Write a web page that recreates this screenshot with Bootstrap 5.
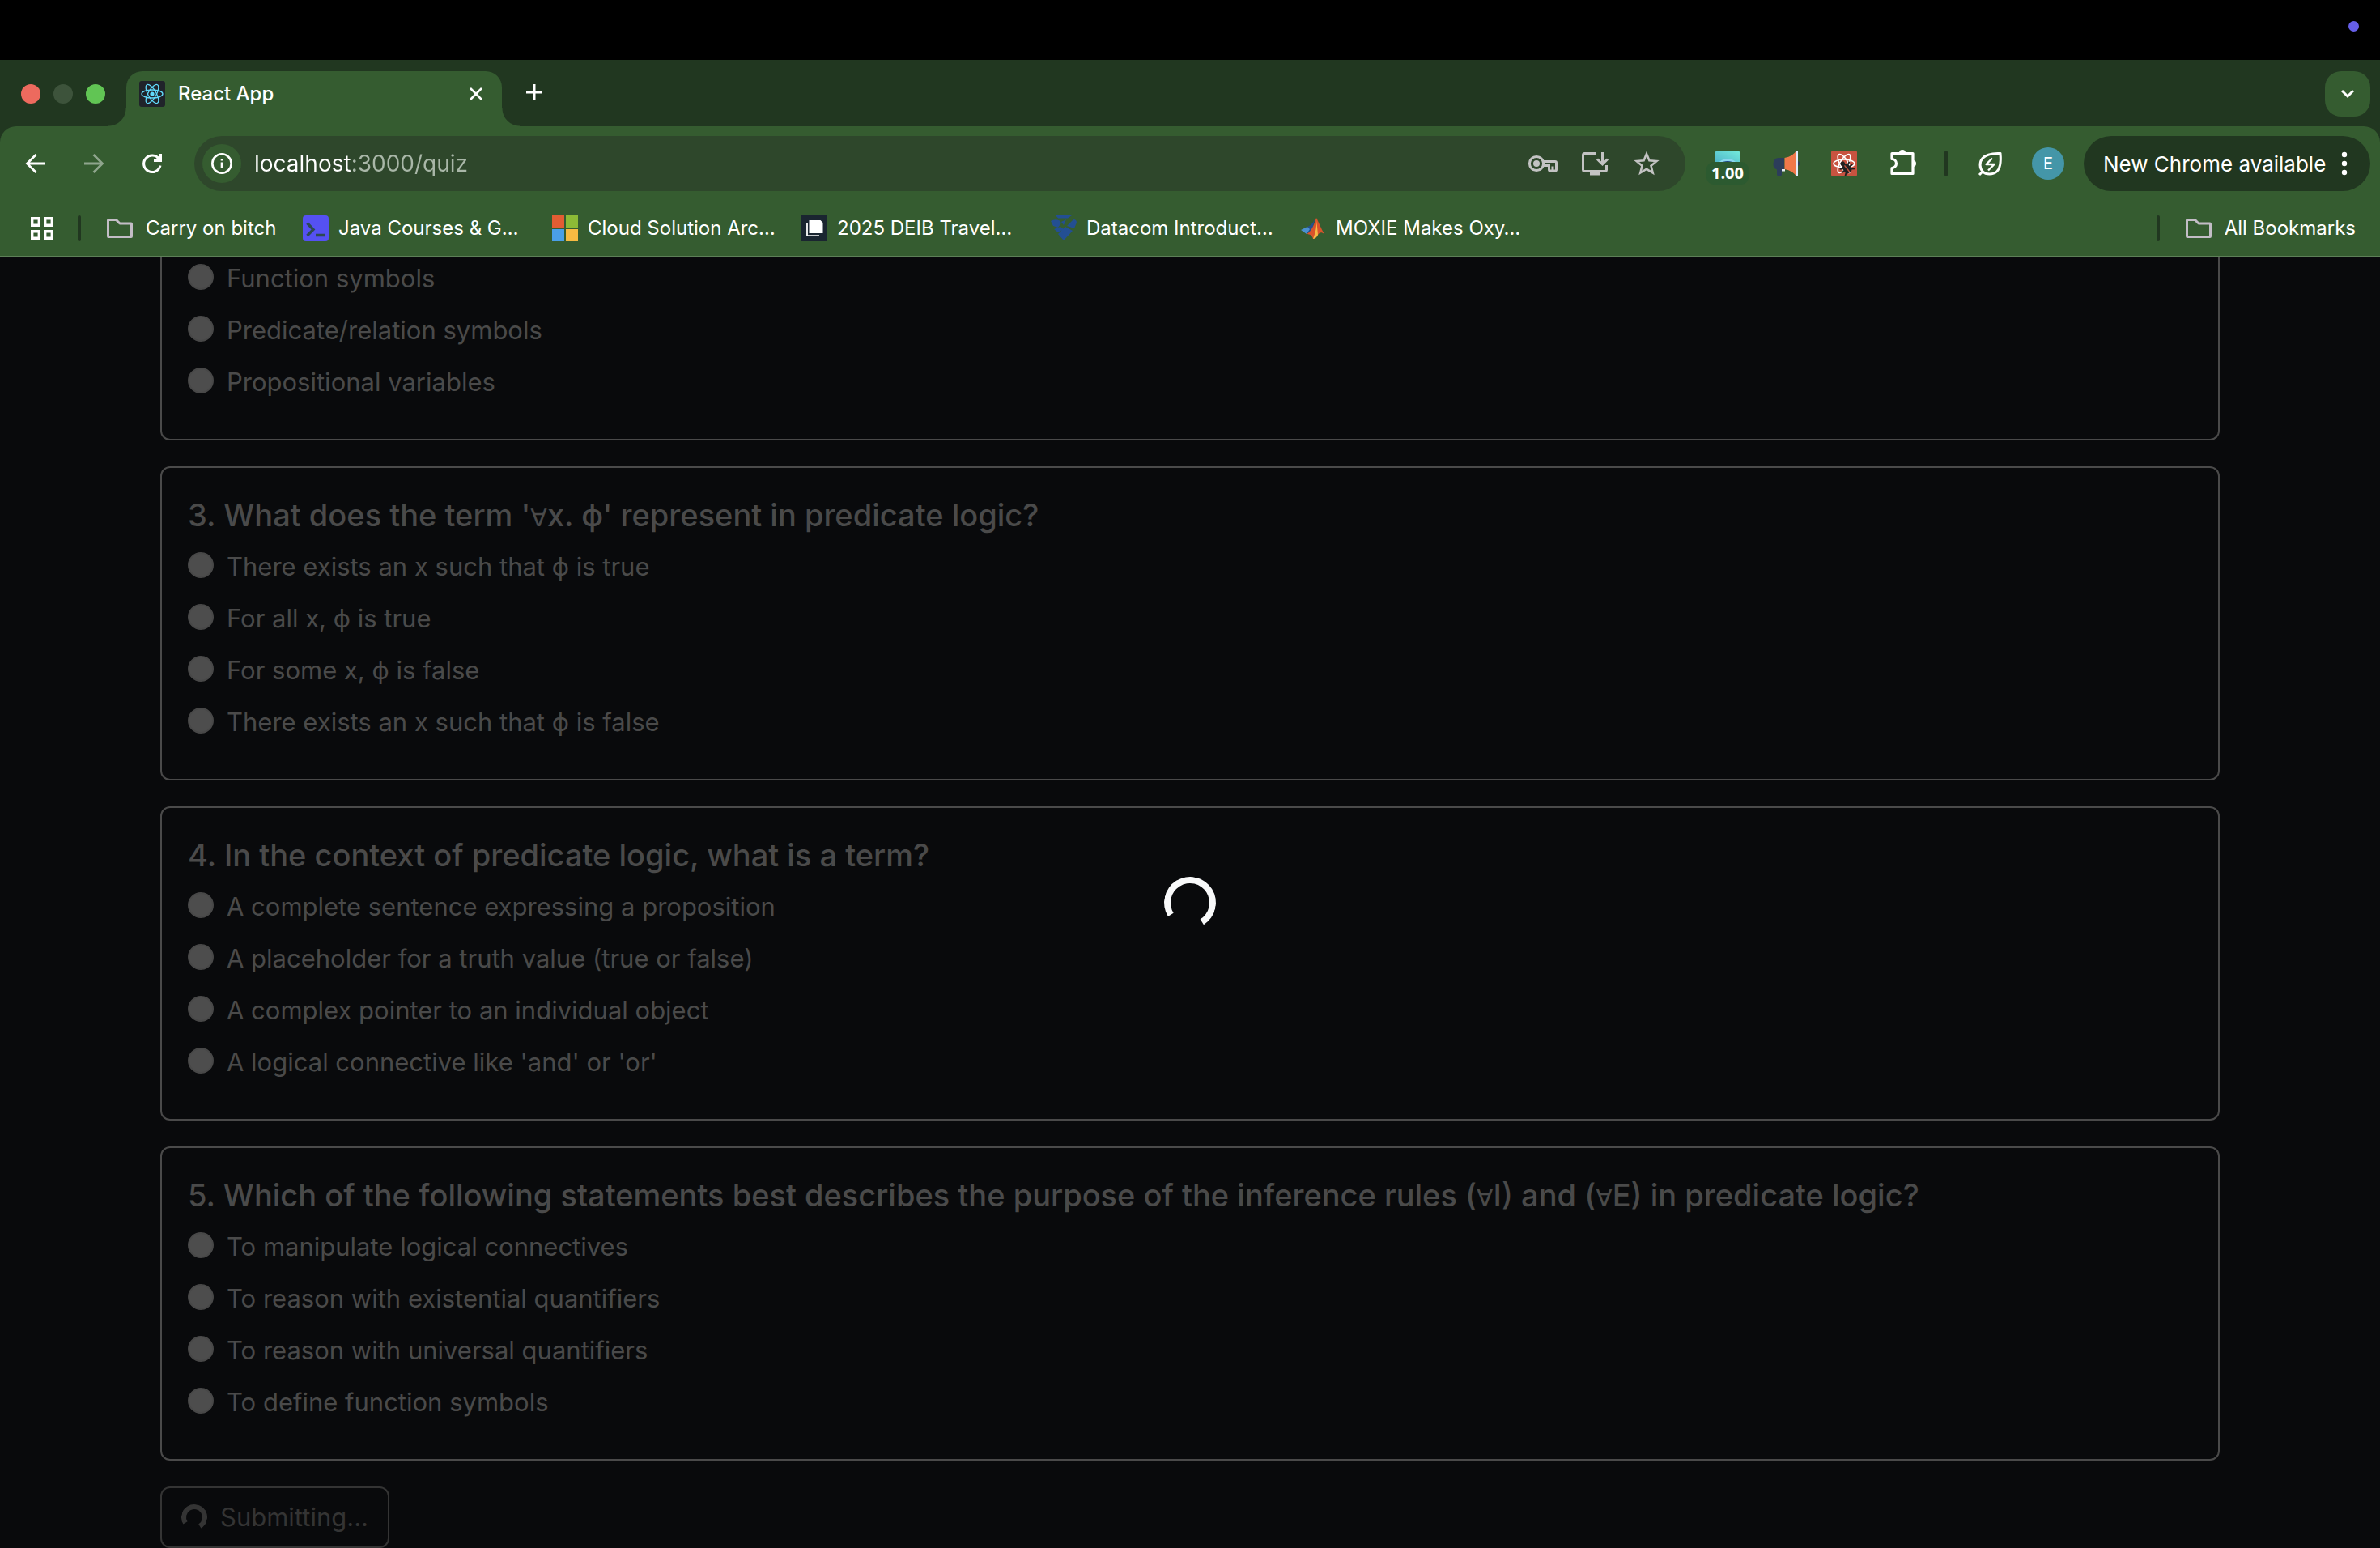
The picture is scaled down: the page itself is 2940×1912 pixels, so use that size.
<!DOCTYPE html>
<html lang="en">
<head>
<meta charset="utf-8">
<meta name="viewport" content="width=device-width, initial-scale=1">
<title>React App</title>
<link href="https://cdn.jsdelivr.net/npm/bootstrap@5.3.0/dist/css/bootstrap.min.css" rel="stylesheet">
<style>
:root{--strip:#213720;--bar:#355c30;--field:#2e472b;--page:#090a0c;--dim:#4a4a4a;--soft:#c3c3c3}
body{font-family:Inter,"Noto Sans",sans-serif;background:var(--page);color:#fff;min-height:100vh;font-size:24px}
svg{display:block;flex:none}
button.plain{background:none;border:0;padding:0;color:inherit;display:flex;align-items:center;justify-content:center}
.menubar{background:#000;height:74px;padding:0 26px}
.cam{width:13px;height:13px;border-radius:50%;background:#665fe8;margin-top:26px}
.chrome{background:var(--strip)}
.tabstrip{padding:14px 12px 0 26px}
.tall{height:56px}
.light{width:24px;height:24px;border-radius:50%}
.lights{gap:16px;margin-right:26px}
.tab-on{width:464px;height:68px;padding:0 20px 12px 16px;gap:16px;background:var(--bar);border-radius:20px 20px 0 0;position:relative;font-weight:500}
.tab-on::before,.tab-on::after{content:"";position:absolute;bottom:0;width:22px;height:22px}
.tab-on::before{right:100%;background:radial-gradient(circle at 0 0,transparent 21px,var(--bar) 22px)}
.tab-on::after{left:100%;background:radial-gradient(circle at 100% 0,transparent 21px,var(--bar) 22px)}
.newtab{margin-left:28px}
.tabsearch{width:56px;border-radius:20px!important;background:var(--bar)!important}
.bars{background:var(--bar);border-radius:20px 20px 0 0;border-bottom:2px solid #5d8058}
.toolrow{height:92px;padding:0 12px 0 24px;gap:32px}
.toolrow button.plain{width:40px;height:40px;flex:none}
.omni{height:68px;border-radius:34px;background:var(--field);padding:0 28px 0 10px;gap:16px}
.omni .info{width:48px!important;height:48px!important;border-radius:50%;background:var(--bar)!important}
.urlbox{font-size:28px;border:0;outline:0;padding:0;color:transparent;background:linear-gradient(90deg,#fff 119px,#a9b7a8 119px);-webkit-background-clip:text;background-clip:text}
.omni-tools{gap:24px;color:var(--soft)}
.vline{width:4px;height:32px;border-radius:2px;background:var(--strip);flex:none}
.count{position:absolute;left:-6px;top:18px;width:52px;height:28px;border-radius:9px;background:#2c5a30;font:700 20px/28px "Open Sans",sans-serif;text-align:center}
.avatar{width:40px;height:40px;border-radius:50%;background:#4496a8;font-size:20px;line-height:40px;text-align:center}
.update{width:354px!important;height:68px!important;border-radius:34px;background:var(--strip)!important;padding:0 28px 0 24px!important;font-size:26px;justify-content:space-between!important;white-space:nowrap}
.marks{height:68px;padding:0 30px 0 36px}
.marks a{color:#fff;text-decoration:none;white-space:nowrap}
.mk{width:308px;gap:12px}
.mk-dir{width:242px;gap:16px;margin-left:32px}
.mk-all{gap:16px;margin-left:32px}
.quiz{padding:0 198px;font-size:31px;line-height:48px;color:var(--dim);overflow:hidden}
.qcard{background:transparent;border:2px solid var(--dim);border-radius:12px;color:inherit;margin-bottom:32px}
.qcard .card-body{padding:32px}
.qcard.cut{border-top:0;border-radius:0 0 12px 12px}
.qcard.cut .card-body{padding-top:0}
.qcard h5{font-size:38px;line-height:48px;font-weight:500;padding-top:2px;margin-bottom:14px}
.opt{padding-left:48px;height:48px;min-height:48px;margin-bottom:16px}
.opt .form-check-input{width:32px;height:32px;margin:8px 0 0 -48px;background:#4d4d4d;border:2px solid #484848;opacity:1}
.opt .form-check-label{opacity:1!important;display:block;padding-top:2px}
.all{font-family:"DejaVu Sans",sans-serif;font-size:30px;font-weight:400;line-height:1}
.send{border:2px solid #343434!important;color:#343434!important;border-radius:12px;font-size:31px;line-height:48px;padding:12px 24px;opacity:1!important;gap:16px}
.spin{animation:none;transform:rotate(103deg)}
.spin-lg{width:64px;height:64px;border-width:8px;color:#f8f9fa}
.spin-sm{width:32px;height:32px;border-width:6px}
.veil{position:absolute;inset:0;pointer-events:none}
</style>
</head>
<body class="d-flex flex-column">
<div class="menubar d-flex justify-content-end"><span class="cam"></span></div>
<header class="chrome">
  <div class="tabstrip d-flex align-items-start">
    <div class="lights tall d-flex align-items-center">
      <span class="light" style="background:#ed6a5e"></span><span class="light" style="background:#3d533b"></span><span class="light" style="background:#61c554"></span>
    </div>
    <div class="tab-on d-flex align-items-center">
      <svg width="32" height="32" viewBox="0 0 32 32"><rect width="32" height="32" rx="3" fill="#20232a"/><g fill="none" stroke="#61dafb" stroke-width="1.3"><ellipse cx="16" cy="16" rx="13" ry="5"/><ellipse cx="16" cy="16" rx="13" ry="5" transform="rotate(60 16 16)"/><ellipse cx="16" cy="16" rx="13" ry="5" transform="rotate(120 16 16)"/></g><circle cx="16" cy="16" r="2.6" fill="#61dafb"/></svg>
      <span class="flex-grow-1">React App</span>
      <button class="plain" aria-label="Close tab"><svg width="24" height="24" viewBox="0 0 24 24" stroke="#fff" stroke-width="2.6"><path d="M5 5l14 14M19 5L5 19"/></svg></button>
    </div>
    <button class="plain newtab tall" aria-label="New tab"><svg width="24" height="24" viewBox="0 0 24 24" stroke="#fff" stroke-width="3"><path d="M12 0v20M2 10h20"/></svg></button>
    <button class="plain tabsearch tall ms-auto" aria-label="Search tabs"><svg width="24" height="24" viewBox="0 0 24 24" fill="none" stroke="#fff" stroke-width="3"><path d="M5 8l7 7 7-7"/></svg></button>
  </div>
  <div class="bars">
    <div class="toolrow d-flex align-items-center">
      <button class="plain" aria-label="Back"><svg width="40" height="40" viewBox="0 0 40 40" fill="none" stroke="#fff" stroke-width="2.8"><path d="M32 20H10M20.500 9L9.500 20l11 11"/></svg></button>
      <button class="plain" aria-label="Forward"><svg width="40" height="40" viewBox="0 0 40 40" fill="none" stroke="#8fa58d" stroke-width="2.800"><path d="M8 20h22M19.500 9l11 11-11 11"/></svg></button>
      <button class="plain" aria-label="Reload"><svg width="40" height="40" viewBox="0 0 40 40" fill="none" stroke="#fff" stroke-width="3"><path d="M30 22.500A10.300 10.300 0 1 1 28.500 14.500M30.500 8v8.500H22"/><path d="M31 8v9h-9z" fill="#fff" stroke="none"/></svg></button>
      <div class="omni d-flex align-items-center flex-grow-1">
        <button class="plain info" aria-label="Site information"><svg width="28" height="28" viewBox="0 0 28 28" fill="none" stroke="#fff" stroke-width="2.600"><circle cx="14" cy="14" r="11.700"/><path d="M14 12.500v7.500M14 8v2.600"/></svg></button>
        <input class="urlbox flex-grow-1" type="text" aria-label="Address" value="localhost:3000/quiz">
        <div class="omni-tools d-flex">
          <button class="plain" aria-label="Passwords"><svg width="40" height="40" viewBox="0 0 40 40" fill="none" stroke="currentColor" stroke-width="3"><circle cx="12" cy="20" r="8.600"/><circle cx="12" cy="20" r="4" fill="currentColor" stroke="none"/><path d="M20 17.500h15q1.500 0 1.500 1.500v8.500q0 1.500-1.500 1.500h-6q-1.500 0-1.500-1.500V22.500H20M32 23.500V28" /></svg></button>
          <button class="plain" aria-label="Install app"><svg width="40" height="40" viewBox="0 0 40 40" fill="none" stroke="currentColor" stroke-width="3"><path d="M22 7.500H7.500q-2 0-2 2v18q0 2 2 2h25q2 0 2-2V22M29.500 6v14M23 14.500l6.500 6.500 6.500-6.500"/><path d="M14 30h12v4.500H14z" fill="currentColor" stroke="none"/></svg></button>
          <button class="plain" aria-label="Bookmark this page"><svg width="40" height="40" viewBox="0 0 40 40" fill="none" stroke="currentColor" stroke-width="2.600"><path d="M20 8l3.400 8.300 9 .7-6.900 5.800 2.200 8.700L20 26.800l-7.700 4.700 2.200-8.700L7.600 17l9-.7z"/></svg></button>
        </div>
      </div>
      <button class="plain position-relative" aria-label="Screen capture">
        <svg width="40" height="40" viewBox="0 0 40 40"><defs><linearGradient id="cap" x1="0" y1="1" x2="1" y2="0"><stop offset="0" stop-color="#4fb3c9"/><stop offset="1" stop-color="#74ecdc"/></linearGradient></defs><path d="M4 20V9q0-5 5-5h22q5 0 5 5v11z" fill="url(#cap)"/><path d="M8.500 20a12.500 9 0 0 1 23 0z" fill="#8ad6ee"/><path d="M11 20a11 7 0 0 1 18 0z" fill="#173f7c"/></svg>
        <span class="count">1.00</span></button>
      <button class="plain" aria-label="Announcements"><svg width="40" height="40" viewBox="0 0 40 40"><path d="M18 13H11a7 7.500 0 0 0-2 14.500V33q0 3 3 3t3-3v-5h3z" fill="#2c3d5b"/><path d="M15 27h4v2.500h-4z" fill="#e8eef5"/><circle cx="34" cy="20" r="3" fill="#2c3d5b"/><path d="M18.500 13Q29 11 33 4v32Q29 29 18.500 27z" fill="#f0784a"/><path d="M32 4h3v32h-3z" fill="#dfeafa"/></svg></button>
      <button class="plain" aria-label="React Developer Tools"><svg width="40" height="40" viewBox="0 0 40 40"><rect x="4" y="4" width="32" height="32" rx="2" fill="#c85340"/><g fill="none" stroke="#fff" stroke-width="1.600"><ellipse cx="20" cy="20" rx="13" ry="5"/><ellipse cx="20" cy="20" rx="13" ry="5" transform="rotate(60 20 20)"/><ellipse cx="20" cy="20" rx="13" ry="5" transform="rotate(120 20 20)"/></g><g transform="rotate(-38 24 26)"><circle cx="23" cy="18" r="2.800" fill="#222"/><rect x="19" y="20" width="9" height="12" rx="4" fill="#222"/><path d="M16 21l4 2M31 21l-4 2M15 26h17M16 32l4-3M31 32l-4-3" stroke="#222" stroke-width="1.800"/><path d="M23.500 21v10" stroke="#c85340" stroke-width="1.400"/></g></svg></button>
      <button class="plain" aria-label="Extensions"><svg width="40" height="40" viewBox="0 0 40 40" fill="none" stroke="#fff" stroke-width="3.200" stroke-linejoin="round"><path d="M7 7.500h26V32.500H7V25.500a5.500 5.500 0 0 0 0-11z"/><path d="M16 7a4 4 0 0 1 8 0zM33 16a4 4 0 0 1 0 8z" fill="#fff" stroke="none"/></svg></button>
      <span class="vline"></span>
      <button class="plain" aria-label="Energy saver"><svg width="40" height="40" viewBox="0 0 40 40" fill="none" stroke="#fff" stroke-width="3" stroke-linejoin="round"><path d="M33 7.500C34 18 33 26 28.500 30 24 34 15 34 11.500 30 7 26 7 18 11 13.500 15.500 8.500 23 7 33 7.500zM11.500 29.500L7 34"/><path d="M23 13.500l-7.500 7.500h10l-7.500 7.500" stroke-width="2.400"/></svg></button>
      <div class="d-flex align-items-center gap-4">
        <span class="avatar">E</span>
        <button class="plain update"><span>New Chrome available</span><svg width="8" height="32" viewBox="0 0 8 32" fill="#fff"><circle cx="4" cy="5" r="3.200"/><circle cx="4" cy="16" r="3.200"/><circle cx="4" cy="27" r="3.200"/></svg></button>
      </div>
    </div>
    <nav class="marks d-flex align-items-center" aria-label="Bookmarks">
      <button class="plain me-4" aria-label="Apps"><svg width="32" height="32" viewBox="0 0 32 32" fill="none" stroke="#fff" stroke-width="3.400"><path d="M3.700 3.700h8.600v8.600H3.700zM19.700 3.700h8.600v8.600h-8.600zM3.700 19.700h8.600v8.600H3.700zM19.700 19.700h8.600v8.600h-8.600z"/></svg></button>
      <span class="vline ms-1"></span>
      <a href="#" class="mk-dir d-flex align-items-center"><svg width="32" height="32" viewBox="0 0 32 32" fill="none" stroke="#c3bdc6" stroke-width="3" stroke-linejoin="round"><path d="M1.500 26V6q0-.5.500-.5h9.500l4.500 4.500h14q.5 0 .5.500V26q0 .500-.5.500H2q-.5 0-.5-.500z"/></svg>Carry on bitch</a>
      <a href="#" class="mk d-flex align-items-center"><svg width="32" height="32" viewBox="0 0 32 32"><rect width="32" height="32" rx="4" fill="#5551f2"/><path d="M5.500 9.500l7.500 8-7.500 7.500M16 24.500h11" fill="none" stroke="#2d4a52" stroke-width="3.400"/></svg>Java Courses &amp; G…</a>
      <a href="#" class="mk d-flex align-items-center"><svg width="32" height="32" viewBox="0 0 32 32"><path fill="#e25d33" d="M0 0h15v15H0z"/><path fill="#8cba36" d="M17 0h15v15H17z"/><path fill="#4a9fe8" d="M0 17h15v15H0z"/><path fill="#f7ba42" d="M17 17h15v15H17z"/></svg>Cloud Solution Arc…</a>
      <a href="#" class="mk d-flex align-items-center"><svg width="32" height="32" viewBox="0 0 32 32"><path fill="#1a2530" d="M0 0h32v32H0z"/><path d="M9.500 6h14l3 3v13h-17z" fill="#fff"/><path d="M7 10v15.200h15" fill="none" stroke="#fff" stroke-width="1.800"/></svg>2025 DEIB Travel…</a>
      <a href="#" class="mk d-flex align-items-center"><svg width="32" height="32" viewBox="0 0 32 32" fill="#234f92"><path d="M6 0h20l-5 3.500H9zM0 7q5-3 11-.5l2 3-4 5.500-6-2zM28 5q4 0 4 4l-3 7-9-3zM13 8l6-3-3 7zM4 17l8-3 4 3-7 4zM18 14l9 5-11 12-7-8z"/></svg>Datacom Introduct…</a>
      <a href="#" class="mk d-flex align-items-center"><svg width="32" height="32" viewBox="0 0 32 32"><path d="M1 18l8-4 4 3-5 6z" fill="#4a90d0"/><path d="M9 14q6-2 9-9l-3 14-7 4 4-6z" fill="#24508c"/><path d="M20 3c3 5 6 14 10 20-4-3-6-2-8 1-2 3-4 5-6 5-1-4-4-6-8-6 6-3 9-11 12-20z" fill="#d9532c"/><path d="M20 4c1 8-1 18-4 25 3 0 5-3 6-5z" fill="#f6b846"/></svg>MOXIE Makes Oxy…</a>
      <span class="vline ms-auto"></span>
      <a href="#" class="mk-all d-flex align-items-center"><svg width="32" height="32" viewBox="0 0 32 32" fill="none" stroke="#c3bdc6" stroke-width="3" stroke-linejoin="round"><path d="M1.500 26V6q0-.5.500-.5h9.500l4.500 4.500h14q.5 0 .5.500V26q0 .500-.5.500H2q-.5 0-.5-.500z"/></svg>All Bookmarks</a>
    </nav>
  </div>
</header>
<main class="quiz flex-grow-1 position-relative">
  <div class="card qcard cut"><div class="card-body" role="radiogroup" aria-label="Question 2">
    <div class="form-check opt"><input class="form-check-input" type="radio" name="q2" id="q2b" disabled><label class="form-check-label" for="q2b">Function symbols</label></div>
    <div class="form-check opt"><input class="form-check-input" type="radio" name="q2" id="q2c" disabled><label class="form-check-label" for="q2c">Predicate/relation symbols</label></div>
    <div class="form-check opt"><input class="form-check-input" type="radio" name="q2" id="q2d" disabled><label class="form-check-label" for="q2d">Propositional variables</label></div>
  </div></div>
  <div class="card qcard"><div class="card-body" role="radiogroup" aria-labelledby="t3">
    <h5 id="t3">3. What does the term '<span class="all">∀</span>x. ϕ' represent in predicate logic?</h5>
    <div class="form-check opt"><input class="form-check-input" type="radio" name="q3" id="q3a" disabled><label class="form-check-label" for="q3a">There exists an x such that ϕ is true</label></div>
    <div class="form-check opt"><input class="form-check-input" type="radio" name="q3" id="q3b" disabled><label class="form-check-label" for="q3b">For all x, ϕ is true</label></div>
    <div class="form-check opt"><input class="form-check-input" type="radio" name="q3" id="q3c" disabled><label class="form-check-label" for="q3c">For some x, ϕ is false</label></div>
    <div class="form-check opt"><input class="form-check-input" type="radio" name="q3" id="q3d" disabled><label class="form-check-label" for="q3d">There exists an x such that ϕ is false</label></div>
  </div></div>
  <div class="card qcard"><div class="card-body" role="radiogroup" aria-labelledby="t4">
    <h5 id="t4">4. In the context of predicate logic, what is a term?</h5>
    <div class="form-check opt"><input class="form-check-input" type="radio" name="q4" id="q4a" disabled><label class="form-check-label" for="q4a">A complete sentence expressing a proposition</label></div>
    <div class="form-check opt"><input class="form-check-input" type="radio" name="q4" id="q4b" disabled><label class="form-check-label" for="q4b">A placeholder for a truth value (true or false)</label></div>
    <div class="form-check opt"><input class="form-check-input" type="radio" name="q4" id="q4c" disabled><label class="form-check-label" for="q4c">A complex pointer to an individual object</label></div>
    <div class="form-check opt"><input class="form-check-input" type="radio" name="q4" id="q4d" disabled><label class="form-check-label" for="q4d">A logical connective like 'and' or 'or'</label></div>
  </div></div>
  <div class="card qcard"><div class="card-body" role="radiogroup" aria-labelledby="t5">
    <h5 id="t5">5. Which of the following statements best describes the purpose of the inference rules (<span class="all">∀</span>I) and (<span class="all">∀</span>E) in predicate logic?</h5>
    <div class="form-check opt"><input class="form-check-input" type="radio" name="q5" id="q5a" disabled><label class="form-check-label" for="q5a">To manipulate logical connectives</label></div>
    <div class="form-check opt"><input class="form-check-input" type="radio" name="q5" id="q5b" disabled><label class="form-check-label" for="q5b">To reason with existential quantifiers</label></div>
    <div class="form-check opt"><input class="form-check-input" type="radio" name="q5" id="q5c" disabled><label class="form-check-label" for="q5c">To reason with universal quantifiers</label></div>
    <div class="form-check opt"><input class="form-check-input" type="radio" name="q5" id="q5d" disabled><label class="form-check-label" for="q5d">To define function symbols</label></div>
  </div></div>
  <button type="submit" class="btn send d-inline-flex align-items-center" disabled><span class="spinner-border spin spin-sm" aria-hidden="true"></span>Submitting...</button>
  <div class="veil d-flex align-items-center justify-content-center"><div class="spinner-border spin spin-lg" role="status" aria-label="Loading"></div></div>
</main>
<script src="https://cdn.jsdelivr.net/npm/bootstrap@5.3.0/dist/js/bootstrap.bundle.min.js"></script>
</body>
</html>
